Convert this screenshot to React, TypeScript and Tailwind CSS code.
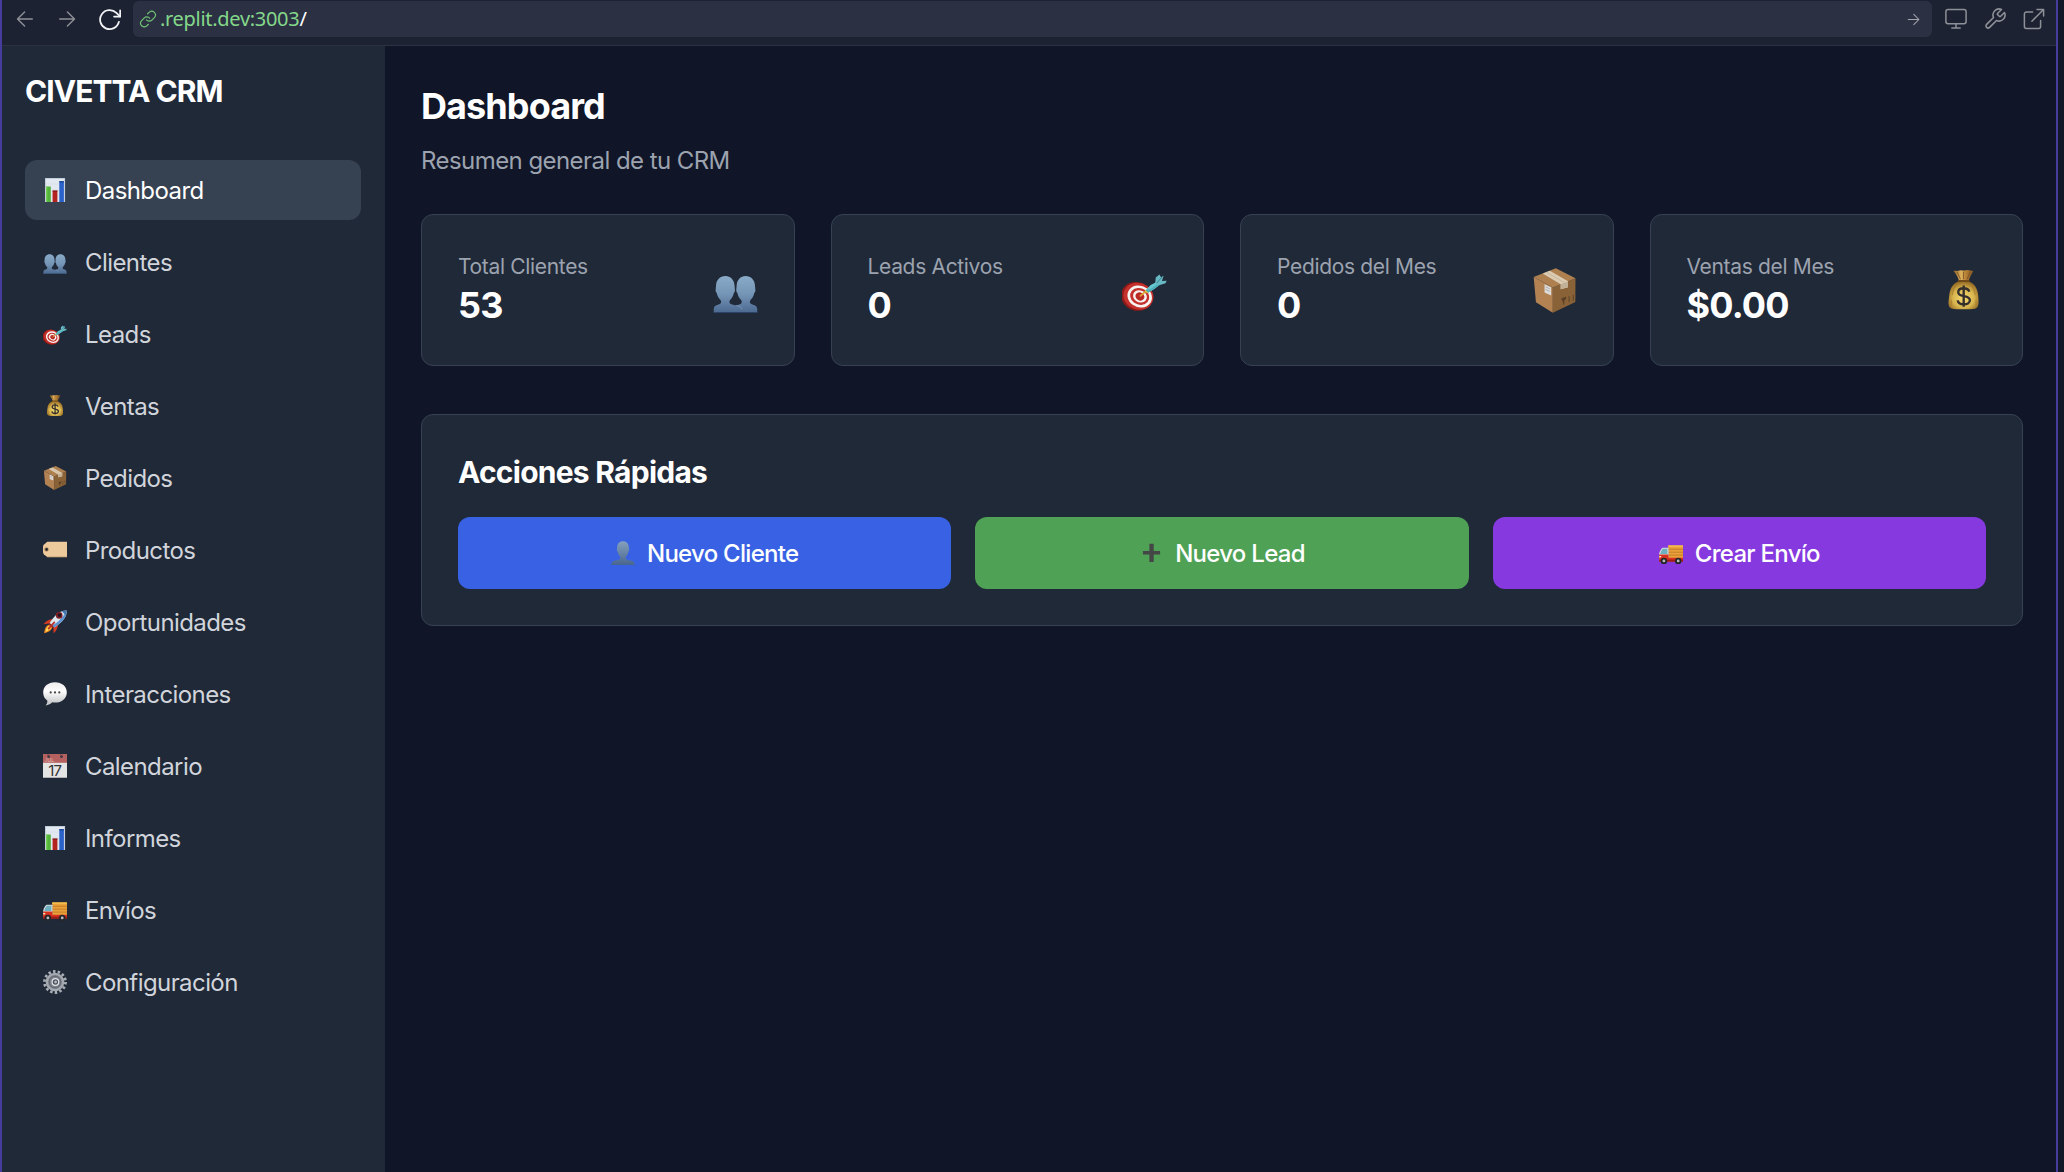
import React, { type ReactNode } from "react";

type IconProps = { className?: string };
type Icon = (props: IconProps) => ReactNode;

/* ---------- Toolbar icons ---------- */

const ArrowLeft: Icon = ({ className }) => (
  <svg viewBox="0 0 18 18" className={className} fill="none" stroke="currentColor" strokeWidth="1.4" strokeLinecap="round" strokeLinejoin="round">
    <path d="M16.3 9H1.5M8.6 1.9 1.5 9l7.1 7.1" />
  </svg>
);

const ArrowRight: Icon = ({ className }) => (
  <svg viewBox="0 0 18 18" className={className} fill="none" stroke="currentColor" strokeWidth="1.4" strokeLinecap="round" strokeLinejoin="round">
    <path d="M1.7 9h14.8M9.4 1.9 16.5 9l-7.1 7.1" />
  </svg>
);

const Reload: Icon = ({ className }) => (
  <svg viewBox="0 0 22 22" className={className} fill="none" stroke="currentColor" strokeWidth="1.7" strokeLinecap="round" strokeLinejoin="round">
    <path d="M20 13.2A9.1 9.1 0 1 1 17.6 4.7L21 8.1" />
    <path d="M21.2 2.4v5.8h-5.8" />
  </svg>
);

const LinkIcon: Icon = ({ className }) => (
  <svg viewBox="0 0 18 18" className={className} fill="none" stroke="currentColor" strokeWidth="1.2" strokeLinecap="round">
    <path d="M7.4 9.9a3.7 3.7 0 0 0 5.3.3l2.9-2.9a3.7 3.7 0 0 0-5.2-5.2L8.6 3.8" />
    <path d="M10.6 8.2a3.7 3.7 0 0 0-5.3-.3l-2.9 2.9a3.7 3.7 0 0 0 5.2 5.2l1.8-1.7" />
  </svg>
);

const Monitor: Icon = ({ className }) => (
  <svg viewBox="0 0 22 22" className={className} fill="none" stroke="currentColor" strokeWidth="1.5" strokeLinecap="round" strokeLinejoin="round">
    <rect x="0.9" y="1.6" width="20.2" height="14.2" rx="2.2" />
    <path d="M11 15.8v4.1M6.8 19.9h8.4" />
  </svg>
);

const Wrench: Icon = ({ className }) => (
  <svg viewBox="0 0 24 24" className={className} fill="none" stroke="currentColor" strokeWidth="1.6" strokeLinecap="round" strokeLinejoin="round">
    <path d="M14.7 6.3a1 1 0 0 0 0 1.4l1.6 1.6a1 1 0 0 0 1.4 0l3.77-3.77a6 6 0 0 1-7.94 7.94l-6.91 6.91a2.12 2.12 0 0 1-3-3l6.91-6.91a6 6 0 0 1 7.94-7.94l-3.76 3.76z" />
  </svg>
);

const OpenExternal: Icon = ({ className }) => (
  <svg viewBox="0 0 22 22" className={className} fill="none" stroke="currentColor" strokeWidth="1.5" strokeLinecap="round" strokeLinejoin="round">
    <path d="M9.6 4H3.4a2 2 0 0 0-2 2v12.4a2 2 0 0 0 2 2h12.2a2 2 0 0 0 2-2v-6" />
    <path d="M8.9 13.2 20.3 1.8M14 1.5h6.6v6.6" />
  </svg>
);

/* ---------- Emoji-style pictograms ---------- */

const ChartEmoji: Icon = ({ className }) => (
  <svg viewBox="0 0 24 24" className={className}>
    <rect x="2" y="0" width="20" height="24" fill="#e1e8f0" />
    <path d="M2 .5h20M2.5 0v24M21.6 0v24" stroke="#b9c6d3" strokeWidth=".8" />
    <path d="M2 6h20M2 12h20M2 18h20" stroke="#c9d4df" strokeWidth=".4" />
    <rect x="3" y="8.5" width="4.8" height="15.5" fill="#55b53b" />
    <rect x="3" y="8.5" width="1.3" height="15.5" fill="#74cf55" />
    <rect x="9.6" y="12.6" width="4.8" height="11.4" fill="#b3231f" />
    <rect x="9.6" y="12.6" width="4.8" height="1" fill="#7d1715" />
    <rect x="16.3" y="3.2" width="4.6" height="20.8" fill="#2b62c9" />
    <rect x="16.3" y="3.2" width="4.6" height="1.2" fill="#173f8e" />
  </svg>
);

const PeopleEmoji: Icon = ({ className }) => (
  <svg viewBox="0 0 24 24" className={className}>
    <defs>
      <linearGradient id="people" x1="0" y1="4" x2="0" y2="24" gradientUnits="userSpaceOnUse">
        <stop offset="0" stopColor="#8aabc8" />
        <stop offset=".5" stopColor="#7595b6" />
        <stop offset="1" stopColor="#4b688f" />
      </linearGradient>
    </defs>
    <path
      fill="url(#people)"
      d="M17.4 4.3c2.9 0 4.9 2.2 5 5.2l.2 2.2c.1.7-.3 1.2-.6 1.6-.3 1.8-1.2 2.8-2 3.8-.6.9-.4 1.8.6 2.2 1.400.500 2.900.600 3 2.700V24H11.500v-2c.1-2 1.600-2.200 2.900-2.700 1-.4 1.200-1.300.6-2.200-.8-1-1.700-2-2-3.800-.3-.4-.7-.9-.6-1.600l.2-2.200c.1-3 2-5.200 4.800-5.200Z"
    />
    <path
      fill="url(#people)"
      d="M6.600 4.300c2.800 0 4.800 2.200 4.900 5.200l.2 2.200c.1.700-.3 1.200-.6 1.600-.3 1.800-1.200 2.800-2 3.800-.6.900-.4 1.800.600 2.200 1.600.500 5.100.600 5.500 2.800V24H.400v-2c.1-2 1.600-2.200 3-2.700 1-.4 1.200-1.300.6-2.200-.8-1-1.700-2-2-3.800-.3-.4-.7-.9-.6-1.600l.2-2.200c.1-3 2.100-5.200 5-5.200Z"
    />
    <path d="M12.200 19.900c1.600.2 3.100.7 3.300 2.200" fill="none" stroke="#87a6c4" strokeWidth=".3" />
    <path d="M.4 23.700h23.200" stroke="#2d4468" strokeWidth=".6" />
  </svg>
);

const PersonEmoji: Icon = ({ className }) => (
  <svg viewBox="0 0 24 24" className={className}>
    <defs>
      <linearGradient id="person" x1="0" y1="0" x2="0" y2="24" gradientUnits="userSpaceOnUse">
        <stop offset="0" stopColor="#86a1bc" />
        <stop offset="1" stopColor="#486590" />
      </linearGradient>
    </defs>
    <path
      fill="url(#person)"
      d="M12 .2c3.500 0 5.700 2.300 5.800 5.800l.3 2.800c.1.900-.3 1.600-.8 2-.3 2.300-1.300 3.700-2.300 4.900-.7 1.200-.4 2.200.8 2.800 2.600 1 7.800 1 7.900 4.800v.7H.3v-.7c.1-3.800 5.300-3.800 7.900-4.800 1.200-.6 1.500-1.600.8-2.800-1-1.200-2-2.600-2.300-4.900-.5-.4-.9-1.100-.8-2L6.200 6C6.300 2.500 8.500.2 12 .2Z"
    />
  </svg>
);

const TargetEmoji: Icon = ({ className }) => (
  <svg viewBox="0 0 24 24" className={className}>
    <g transform="translate(0 2.2) scale(1 .92)">
      <g transform="rotate(38 8.500 14)">
        <ellipse cx="8.100" cy="14.400" rx="8.700" ry="8.100" fill="#8c1a18" />
        <ellipse cx="8.700" cy="13.800" rx="8.300" ry="7.600" fill="#c4302b" />
        <ellipse cx="9.300" cy="13.500" rx="6.800" ry="6.100" fill="#f7f3f1" />
        <ellipse cx="9.300" cy="13.500" rx="5.300" ry="4.700" fill="#c4302b" />
        <ellipse cx="9.400" cy="13.400" rx="3.900" ry="3.400" fill="#f7f3f1" />
        <ellipse cx="9.400" cy="13.400" rx="2.500" ry="2.200" fill="#b82a26" />
      </g>
      <path d="m9.800 13.800 3.500-3.200" stroke="#e0a62e" strokeWidth=".9" strokeLinecap="round" />
      <path d="m12.300 10.600 3-3.100 3.600-2 1.500 1.600-3 2.600-3.700 2.400Z" fill="#66c8cf" />
      <path d="m12.300 10.600 1.400 1.500 3.700-2.400 3-2.600-.8-.7-4.300 3.300Z" fill="#4fb0bd" />
      <path d="m17.700 6.500.3-3.400L20 1.400l.8 1.500 1.400-.8-.9 3 2.500-.1-.6 1.500-3.400 1.100Z" fill="#69b9c4" />
      <path d="m18.500 6.300 3.200-3.900" stroke="#327c8b" strokeWidth=".5" />
      <path d="m12.300 10.600 1.400 1.500" stroke="#d7c04b" strokeWidth=".8" />
    </g>
  </svg>
);

const MoneyEmoji: Icon = ({ className }) => (
  <svg viewBox="0 0 24 24" className={className}>
    <defs>
      <radialGradient id="bag" cx=".5" cy=".6" r=".58">
        <stop offset="0" stopColor="#f7dc70" />
        <stop offset=".6" stopColor="#d9b54e" />
        <stop offset="1" stopColor="#956b24" />
      </radialGradient>
      <linearGradient id="neck" x1="0" x2="1" y1="0" y2="0">
        <stop offset="0" stopColor="#8a5d25" />
        <stop offset=".4" stopColor="#dfb25d" />
        <stop offset=".6" stopColor="#b98439" />
        <stop offset="1" stopColor="#80541f" />
      </linearGradient>
    </defs>
    <path d="M6.600 1.500c1.500-.3 2 .4 3.200-.2 1.200-.5 2.200.4 3.400-.1 1.400-.4 2.200.6 4.100.2-.9 1.900-2.100 3.300-2.700 5.900H9.700C9.200 4.800 8 3.400 6.600 1.500Z" fill="url(#neck)" />
    <path d="M8.600 2.100 10.400 6M12 2v4M15.500 2.200 13.900 6" stroke="#704b20" strokeWidth=".4" />
    <path d="M9.500 7h5.100c3.200 1.200 4.900 3.600 5.200 7.400.2 2.500.5 4.300-.1 6-.6 1.300-2.200 1.600-4.300 1.600H8.200c-2 0-3.500-.4-4-1.700-.5-1.600 0-3.700.2-5.900C4.800 10.600 6.400 8.200 9.500 7Z" fill="url(#bag)" />
    <path d="M9.400 6.900h5.400" stroke="#704919" strokeWidth="1" strokeLinecap="round" />
    <path d="M9 8.500c-1.700 1.300-2.700 3-3 6M15.200 8.500c1.700 1.300 2.700 3 3 6M5.500 17v3M18.700 17v3" fill="none" stroke="#a57a2e" strokeWidth=".4" />
    <path d="M15.100 12.600c-.4-1.200-1.500-1.800-3-1.800-1.700 0-2.900.8-2.900 2.100 0 3 6.200 1.300 6.200 4.300 0 1.300-1.300 2.200-3.200 2.200-1.800 0-3.100-.8-3.300-2.100M12.100 9.300v11.300" fill="none" stroke="#342f2d" strokeWidth="1.250" />
  </svg>
);

const BoxEmoji: Icon = ({ className }) => (
  <svg viewBox="0 0 24 24" className={className}>
    <path d="m.900 4.800 10.200 5.600v13.500L2.100 18.200Z" fill="#b28253" />
    <path d="m11.100 10.400 12.100-4.900-.1 12.700-12 5.700Z" fill="#8a6238" />
    <path d="M.9 4.800 12.700.100l10.500 5.400-12.100 4.900Z" fill="#ae8050" />
    <path d="M5.700 2.900 9.500 1.400l9.700 5.700v3.100l-3.900 1.100V8.600Z" fill="#dbcbb3" />
    <path d="m7.600 2.200 9.700 5.600" stroke="#c2af93" strokeWidth=".4" />
    <path d="m15.300 8.600 3.900-1.500v3.100l-3.900 1.100Z" fill="#c2b197" />
    <path d="m6.700 8.600 3.500 1.700v4.300L6.700 13Z" fill="#dedcda" />
    <path d="m7.200 10 2.300 1.100M7.200 11.400l2.300 1.100" stroke="#9b9ca0" strokeWidth=".4" />
    <path d="m15.500 16.300 2.700-1.100c.1 1.300-.3 1.900-1.100 2.300v2.100" fill="#5b4126" />
    <path d="M16.900 17v2.500M19.800 15v3.200M22 14.200v3.200" stroke="#5b4126" strokeWidth=".5" />
  </svg>
);

const TagEmoji: Icon = ({ className }) => (
  <svg viewBox="0 0 24 24" className={className}>
    <path d="M4.300 3.700H24v15.400H4.300L1 16.400Q0 15.400 0 14V8.800q0-1.400 1-2.400Z" fill="#ecca9c" />
    <path d="M4.300 19.100H24" stroke="#9f825e" strokeWidth=".7" />
    <circle cx="3.500" cy="11.400" r="2.200" fill="#b58c5c" />
    <circle cx="3.600" cy="11.400" r="1.300" fill="#1c2430" />
  </svg>
);

const RocketEmoji: Icon = ({ className }) => (
  <svg viewBox="0 0 24 24" className={className}>
    <path d="M9.700 9.200c-3-.2-6.300 1.100-9.200 5l5.700-.8ZM14.800 14.200c.3 2.900-1 6.300-4.200 9.100l-.2-5.700Z" fill="#d63a22" />
    <path d="M6.500 14.700C3.200 15 1.600 18.500 1.200 23.200c4.300-.9 7.400-2.700 8-6.100Z" fill="#f08a24" />
    <path d="M6.200 16c-2 .5-3.100 3.100-3.700 5.800 2.600-.8 4.700-2.100 5.300-4.200Z" fill="#ffe45c" />
    <path d="M23.600.4c.5 5.400-2.600 10.800-12.600 17.300L6.400 13.200C12 4.300 17.500.200 23.600.400Z" fill="#dce6ef" />
    <path d="M23.600.4c.5 5.400-2.600 10.800-12.600 17.300l-2.200-2.100C15.500 12 20.600 6.500 23.600.4Z" fill="#5f94d0" />
    <path d="M23.600.4c-1.600-.100-3.200.2-4.800.9l3.900 4c.8-1.600 1-3.200.9-4.900Z" fill="#4377ae" />
    <circle cx="16.200" cy="5.400" r="3.300" fill="#811f28" />
    <circle cx="16.500" cy="5.100" r="1.900" fill="#23151c" />
    <path d="m5.600 14.200 4.700 4.600 1.200-1-5-5Z" fill="#8e2b28" />
    <path d="m5.500 18.700 5.800-6.300" stroke="#bd2f25" strokeWidth="1.700" strokeLinecap="round" />
  </svg>
);

const BubbleEmoji: Icon = ({ className }) => (
  <svg viewBox="0 0 24 24" className={className}>
    <defs>
      <linearGradient id="bubble" x1="0" y1="0" x2="0" y2="1">
        <stop offset="0" stopColor="#ededed" />
        <stop offset=".4" stopColor="#fdfdfd" />
        <stop offset="1" stopColor="#bdbfc1" />
      </linearGradient>
    </defs>
    <path d="M12 .2c6.900 0 11.800 4.200 11.800 10.200S18.900 20.600 12 20.600c-1 0-2-.1-2.900-.3-1.300 1.700-3.500 2.900-6.500 3.100 1.300-1.200 1.900-2.800 1.700-4.800C1.700 16.700.2 13.900.2 10.400.2 4.400 5.100.2 12 .2Z" fill="url(#bubble)" />
    <circle cx="7.700" cy="10.400" r="1.100" fill="#444" />
    <circle cx="12" cy="10.400" r="1.100" fill="#444" />
    <circle cx="16.300" cy="10.400" r="1.100" fill="#444" />
  </svg>
);

const CalendarEmoji: Icon = ({ className }) => (
  <svg viewBox="0 0 24 24" className={className}>
    <rect width="24" height="24" fill="#e4e4e5" />
    <rect width="24" height="8.800" fill="#b5615f" />
    <path d="M0 23.500h24" stroke="#aeb0b3" />
    <circle cx="5.700" cy="2.600" r="1.300" fill="#243144" />
    <circle cx="18.500" cy="2.600" r="1.300" fill="#243144" />
    <path d="M5.700 2.600 4.800 0M18.500 2.600 17.600 0" stroke="#7d3d40" strokeWidth=".8" />
    <text x="1.600" y="8.100" fontFamily="Inter, sans-serif" fontSize="5" fill="#e6bdbb">JUL</text>
    <text x="11.700" y="21.800" textAnchor="middle" fontFamily="Inter, sans-serif" fontSize="15" letterSpacing="-.9" fill="#333">17</text>
  </svg>
);

const TruckEmoji: Icon = ({ className }) => (
  <svg viewBox="0 0 24 24" className={className}>
    <path d="M9.200 4.400H24v13H9.200Z" fill="#e9a13a" />
    <path d="M9.200 4.400H24v1.500H9.200Z" fill="#f3c04f" />
    <path d="M9.500 8.300H24M9.500 11.200H24M9.500 14.100H24" stroke="#b86f22" strokeWidth=".7" />
    <path d="M3.600 6.700H9.500v12H.2v-6.300c.7-2.300 1.600-4.500 3.400-5.700Z" fill="#d5dde0" />
    <path d="M3.900 7.700h4.500v5.200H1.300c.5-2 1.300-4 2.600-5.200Z" fill="#6fb0bf" />
    <path d="M.2 13.600h9.300v3.100H24v3.800H.2Z" fill="#d8301f" />
    <path d="M.2 18.700H24v1.900H.2Z" fill="#9c1d15" />
    <path d="M.3 15h1.900v1.400H.3Z" fill="#fff1c0" />
    <circle cx="4.900" cy="19.900" r="3.200" fill="#24262a" />
    <circle cx="4.900" cy="19.900" r="1.400" fill="#b9bbbd" />
    <circle cx="19.200" cy="19.900" r="3.200" fill="#24262a" />
    <circle cx="19.200" cy="19.900" r="1.400" fill="#b9bbbd" />
  </svg>
);

const GearEmoji: Icon = ({ className }) => (
  <svg viewBox="0 0 24 24" className={className}>
    <circle cx="12" cy="12" r="10.500" fill="none" stroke="#a9aeb5" strokeWidth="2.800" strokeDasharray="2.500 2.212" />
    <circle cx="12" cy="12" r="8.100" fill="#777d86" stroke="#a4a9b0" strokeWidth="2.400" />
    <circle cx="12" cy="12" r="5.700" fill="#7d838c" stroke="#5d636c" strokeWidth=".8" />
    <circle cx="12.400" cy="12" r="3.300" fill="#4b535f" stroke="#e2e4e7" strokeWidth="1.200" />
    <circle cx="12.600" cy="12" r="1.400" fill="#b5bac1" />
  </svg>
);

const PlusEmoji: Icon = ({ className }) => (
  <svg viewBox="0 0 24 24" className={className}>
    <path d="M10.400 2.700h4.300v7.200h6.400v3.600h-6.400v7.600h-4.300v-7.600H3.900V9.900h6.500Z" fill="#444745" />
  </svg>
);

/* ---------- Data ---------- */

const navItems: { label: string; icon: Icon; active?: boolean }[] = [
  { label: "Dashboard", icon: ChartEmoji, active: true },
  { label: "Clientes", icon: PeopleEmoji },
  { label: "Leads", icon: TargetEmoji },
  { label: "Ventas", icon: MoneyEmoji },
  { label: "Pedidos", icon: BoxEmoji },
  { label: "Productos", icon: TagEmoji },
  { label: "Oportunidades", icon: RocketEmoji },
  { label: "Interacciones", icon: BubbleEmoji },
  { label: "Calendario", icon: CalendarEmoji },
  { label: "Informes", icon: ChartEmoji },
  { label: "Envíos", icon: TruckEmoji },
  { label: "Configuración", icon: GearEmoji },
];

const stats: { label: string; value: string; icon: Icon }[] = [
  { label: "Total Clientes", value: "53", icon: PeopleEmoji },
  { label: "Leads Activos", value: "0", icon: TargetEmoji },
  { label: "Pedidos del Mes", value: "0", icon: BoxEmoji },
  { label: "Ventas del Mes", value: "$0.00", icon: MoneyEmoji },
];

const actions: { label: string; icon: Icon; color: string }[] = [
  { label: "Nuevo Cliente", icon: PersonEmoji, color: "bg-[#3862e3]" },
  { label: "Nuevo Lead", icon: PlusEmoji, color: "bg-[#4fa156]" },
  { label: "Crear Envío", icon: TruckEmoji, color: "bg-[#8639de]" },
];

/* ---------- Sections ---------- */

function BrowserBar() {
  return (
    <header className="flex h-[46px] shrink-0 items-start border-b border-[#2c3242] bg-[#1d2232] text-[#8d9096]">
      <div className="flex h-[38px] w-[131px] shrink-0 items-center pl-3.5">
        <button aria-label="Atrás"><ArrowLeft className="size-[18px]" /></button>
        <button aria-label="Adelante" className="ml-6"><ArrowRight className="size-[18px]" /></button>
        <button aria-label="Recargar" className="ml-[22px] text-[#f2f3f5]"><Reload className="size-[23px]" /></button>
      </div>
      <div className="mt-px flex h-9 flex-1 items-center rounded-md bg-[#2b3043] pr-3 pl-1.5">
        <LinkIcon className="size-[18px] text-[#6fc273]" />
        <span className="ml-[3px] font-['Noto_Sans',sans-serif] text-xl leading-9 tracking-[-0.3px] text-[#84d88a]">
          .replit.dev:3003<span className="text-white">/</span>
        </span>
        <ArrowRight className="ml-auto size-[13px] text-[#a3a6ae]" />
      </div>
      <div className="flex h-[38px] shrink-0 items-center pr-[11px] pl-[13px]">
        <button aria-label="Pantalla"><Monitor className="size-[22px]" /></button>
        <button aria-label="Herramientas" className="ml-4"><Wrench className="size-[24px]" /></button>
        <button aria-label="Abrir en otra pestaña" className="ml-4"><OpenExternal className="size-[22px]" /></button>
      </div>
    </header>
  );
}

function Sidebar() {
  return (
    <aside className="w-[383px] shrink-0 bg-[#202938] pt-6 pr-6 pl-[23px]">
      <h1 className="h-[42px] text-[30px] leading-[42px] font-bold tracking-[-0.95px] text-white">CIVETTA CRM</h1>
      <nav className="mt-12 flex flex-col gap-3">
        {navItems.map(({ label, icon: Glyph, active }) => (
          <a
            key={label}
            className={
              active
                ? "flex h-15 items-center gap-[18px] rounded-xl bg-[#364152] px-[18px] text-white"
                : "flex h-15 items-center gap-[18px] rounded-xl px-[18px] text-[#d1d5db]"
            }
          >
            <Glyph className="size-6 shrink-0" />
            <span className="pt-0.5 text-2xl tracking-[-0.58px]">{label}</span>
          </a>
        ))}
      </nav>
    </aside>
  );
}

function Stats() {
  return (
    <section className="mt-[35px] grid grid-cols-4 gap-9">
      {stats.map(({ label, value, icon: Glyph }) => (
        <article key={label} className="flex h-[152px] items-center justify-between rounded-xl border border-[#364152] bg-[#202938] px-9">
          <div>
            <p className="text-[21px] leading-8 tracking-[-0.33px] text-[#9ca3af]">{label}</p>
            <p className="mb-0.5 text-4xl leading-11 font-bold tracking-[-0.8px] text-white">{value}</p>
          </div>
          <Glyph className="size-[45px]" />
        </article>
      ))}
    </section>
  );
}

function QuickActions() {
  return (
    <section className="mt-12 h-[212px] rounded-xl border border-[#364152] bg-[#202938] px-9 pt-9">
      <h3 className="text-[30px] leading-[42px] font-bold tracking-[-0.75px] text-white">Acciones Rápidas</h3>
      <div className="mt-6 grid grid-cols-3 gap-6">
        {actions.map(({ label, icon: Glyph, color }) => (
          <button key={label} className={`flex h-[72px] items-center justify-center gap-3 rounded-xl text-white ${color}`}>
            <Glyph className="size-6" />
            <span className="pt-px text-2xl font-medium tracking-[-0.72px]">{label}</span>
          </button>
        ))}
      </div>
    </section>
  );
}

export default function App() {
  return (
    <div className="h-[1172px] w-full overflow-hidden bg-[#111827] pr-1.5 font-[Inter,sans-serif]">
      <div className="flex h-full flex-col border-x-2 border-[#463c9c] bg-[#101627]">
        <BrowserBar />
        <div className="flex min-h-0 flex-1">
          <Sidebar />
          <main className="flex-1 pt-9 pr-[33px] pl-9">
            <h2 className="text-4xl leading-[48px] font-bold tracking-[-0.9px] text-white">Dashboard</h2>
            <p className="mt-[13px] text-2xl leading-9 tracking-[-0.56px] text-[#9ca3af]">Resumen general de tu CRM</p>
            <Stats />
            <QuickActions />
          </main>
        </div>
      </div>
    </div>
  );
}
